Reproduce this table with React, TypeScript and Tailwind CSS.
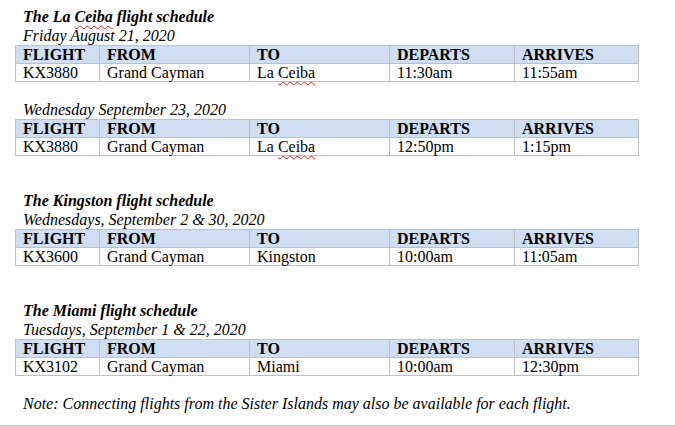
import React from 'react';

type Flight = { flight: string; from: string; to: string; departs: string; arrives: string };

const Squiggle = ({ children }: { children: React.ReactNode }) => (
  <span className="underline decoration-wavy decoration-[#d42020] decoration-1 underline-offset-[3px]">{children}</span>
);

const FlightTable = ({ row, toNode }: { row: Flight; toNode?: React.ReactNode }) => {
  const cell = 'border border-[#c0c0c0] h-[18px] p-0 pl-[7px] leading-[17px] align-middle';
  return (
    <table className="border-collapse w-[623px] table-fixed">
      <colgroup>
        <col className="w-[84px]" />
        <col className="w-[150px]" />
        <col className="w-[140px]" />
        <col className="w-[125px]" />
        <col className="w-[124px]" />
      </colgroup>
      <tbody>
        <tr className="bg-[#cfdef1] font-bold">
          <td className={cell}>FLIGHT</td>
          <td className={cell}>FROM</td>
          <td className={cell}>TO</td>
          <td className={cell}>DEPARTS</td>
          <td className={cell}>ARRIVES</td>
        </tr>
        <tr>
          <td className={cell}>{row.flight}</td>
          <td className={cell}>{row.from}</td>
          <td className={cell}>{toNode ?? row.to}</td>
          <td className={cell}>{row.departs}</td>
          <td className={cell}>{row.arrives}</td>
        </tr>
      </tbody>
    </table>
  );
};

export default function App() {
  return (
    <div
      className="w-[675px] h-[427px] bg-white text-black text-[16px] flex flex-col overflow-hidden"
      style={{ fontFamily: '"Liberation Serif", "Times New Roman", serif' }}
    >
      <div className="flex-1 pl-[15px] pt-[8px]">
        {/* La Ceiba */}
        <div className="pl-[8px] italic font-bold leading-[18px]">
          The La <Squiggle>Ceiba</Squiggle> flight schedule
        </div>
        <div className="pl-[8px] italic leading-[19px]">Friday August 21, 2020</div>
        <FlightTable
          row={{ flight: 'KX3880', from: 'Grand Cayman', to: 'La Ceiba', departs: '11:30am', arrives: '11:55am' }}
          toNode={<>La <Squiggle>Ceiba</Squiggle></>}
        />

        <div className="h-[18px]" />
        <div className="pl-[8px] italic leading-[19px]">Wednesday September 23, 2020</div>
        <FlightTable
          row={{ flight: 'KX3880', from: 'Grand Cayman', to: 'La Ceiba', departs: '12:50pm', arrives: '1:15pm' }}
          toNode={<>La <Squiggle>Ceiba</Squiggle></>}
        />

        {/* Kingston */}
        <div className="h-[36px]" />
        <div className="pl-[8px] italic font-bold leading-[18px]">The Kingston flight schedule</div>
        <div className="pl-[8px] italic leading-[19px]">Wednesdays, September 2 &amp; 30, 2020</div>
        <FlightTable
          row={{ flight: 'KX3600', from: 'Grand Cayman', to: 'Kingston', departs: '10:00am', arrives: '11:05am' }}
        />

        {/* Miami */}
        <div className="h-[36px]" />
        <div className="pl-[8px] italic font-bold leading-[18px]">The Miami flight schedule</div>
        <div className="pl-[8px] italic leading-[19px]">Tuesdays, September 1 &amp; 22, 2020</div>
        <FlightTable
          row={{ flight: 'KX3102', from: 'Grand Cayman', to: 'Miami', departs: '10:00am', arrives: '12:30pm' }}
        />

        <div className="pl-[8px] pt-[18px] italic leading-[19px]">
          Note: Connecting flights from the Sister Islands may also be available for each flight.
        </div>
      </div>
      <div className="h-[2px] bg-[#d4d4d4]" />
    </div>
  );
}
